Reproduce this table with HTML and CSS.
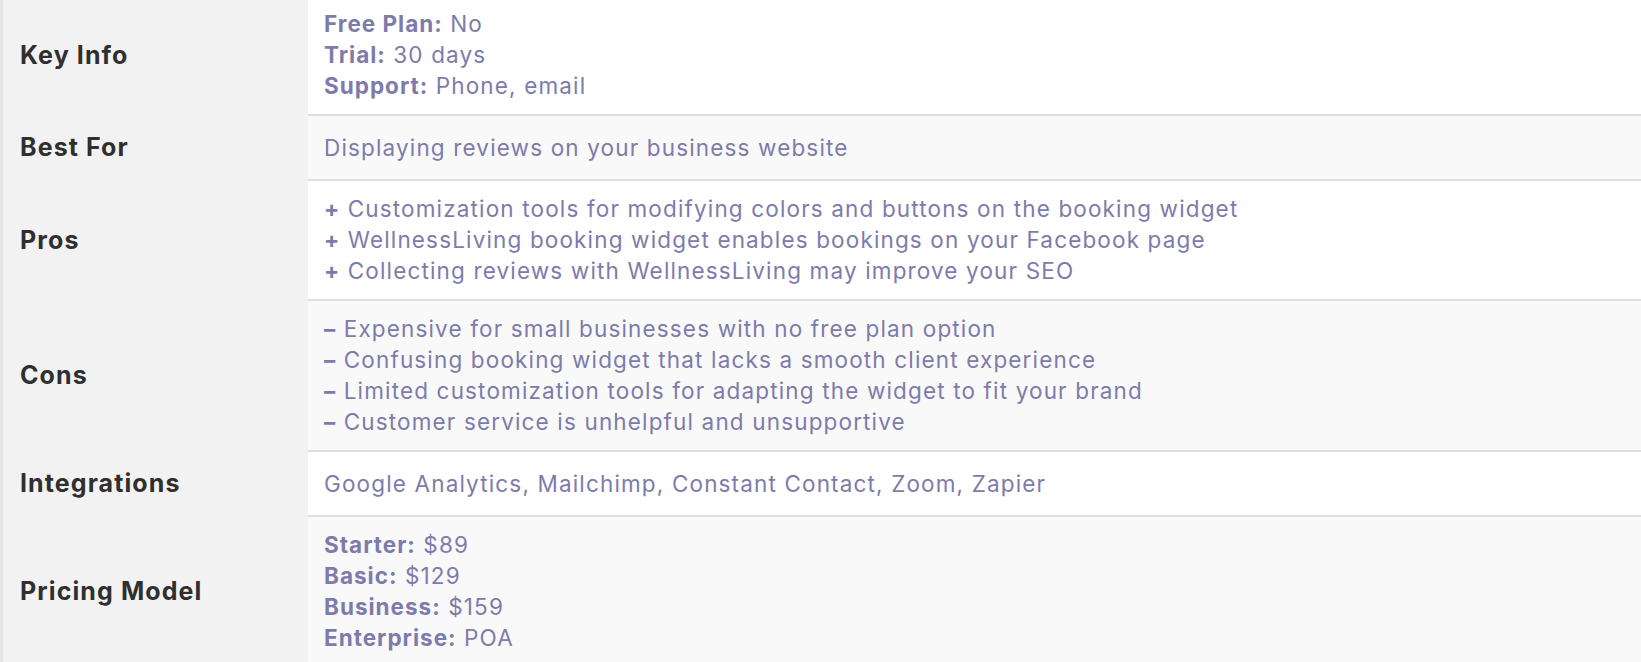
FILE: index.html
```html
<!DOCTYPE html>
<html lang="en">
<head>
<meta charset="utf-8">
<title>WellnessLiving overview</title>
<link rel="stylesheet" href="styles.css">
</head>
<body>
<div class="table">
  <div class="row">
    <div class="label">Key Info</div>
    <div class="value">
      <div><b>Free Plan:</b> No</div>
      <div><b>Trial:</b> 30 days</div>
      <div><b>Support:</b> Phone, email</div>
    </div>
  </div>
  <div class="row alt">
    <div class="label">Best For</div>
    <div class="value">
      <div>Displaying reviews on your business website</div>
    </div>
  </div>
  <div class="row">
    <div class="label">Pros</div>
    <div class="value">
      <div><b>+</b> Customization tools for modifying colors and buttons on the booking widget</div>
      <div><b>+</b> WellnessLiving booking widget enables bookings on your Facebook page</div>
      <div><b>+</b> Collecting reviews with WellnessLiving may improve your SEO</div>
    </div>
  </div>
  <div class="row alt">
    <div class="label">Cons</div>
    <div class="value">
      <div><b>–</b> Expensive for small businesses with no free plan option</div>
      <div><b>–</b> Confusing booking widget that lacks a smooth client experience</div>
      <div><b>–</b> Limited customization tools for adapting the widget to fit your brand</div>
      <div><b>–</b> Customer service is unhelpful and unsupportive</div>
    </div>
  </div>
  <div class="row">
    <div class="label">Integrations</div>
    <div class="value">
      <div>Google Analytics, Mailchimp, Constant Contact, Zoom, Zapier</div>
    </div>
  </div>
  <div class="row alt">
    <div class="label">Pricing Model</div>
    <div class="value">
      <div><b>Starter:</b> $89</div>
      <div><b>Basic:</b> $129</div>
      <div><b>Business:</b> $159</div>
      <div><b>Enterprise:</b> POA</div>
    </div>
  </div>
</div>
</body>
</html>
```
FILE: styles.css
```css
html, body {
  margin: 0;
  padding: 0;
  background: #ffffff;
  overflow: hidden;
}
body {
  font-family: Inter, "Open Sans", sans-serif;
}
.table {
  margin-top: -4px;
  border-left: 3px solid #e3e3e3;
  display: flex;
  flex-direction: column;
}
.row {
  display: grid;
  grid-template-columns: 305px 1fr;
}
.label {
  background: #f2f2f2;
  color: #2f2f2f;
  font-weight: 700;
  font-size: 25px;
  letter-spacing: 1.1px;
  line-height: 38px;
  padding: 12px 17px 13px;
  display: flex;
  align-items: center;
}
.value {
  background: #ffffff;
  color: #7d7bab;
  font-size: 22.5px;
  line-height: 31px;
  letter-spacing: 1.15px;
  padding: 12px 16px 13px;
  display: flex;
  flex-direction: column;
  justify-content: center;
}
.row + .row .value {
  border-top: 2px solid #dedede;
}
.row + .row .label {
  border-top: 2px solid #f2f2f2;
}
.row.alt .value {
  background: #f9f9f9;
}
.value b {
  font-weight: 700;
  letter-spacing: 1px;
}
```
